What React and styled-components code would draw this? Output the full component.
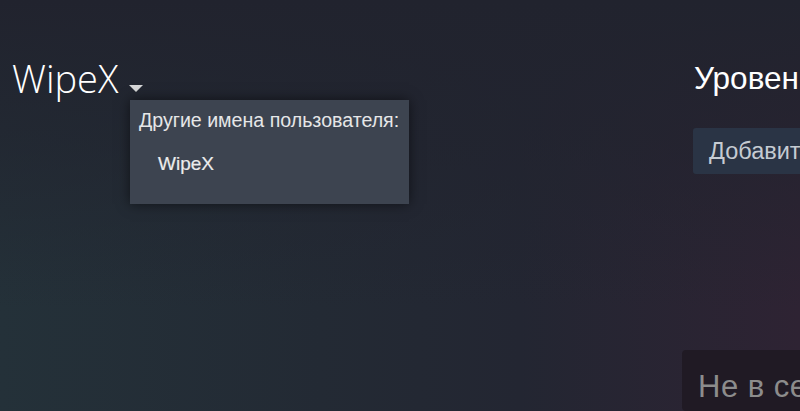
import React from 'react';
import styled, { createGlobalStyle } from 'styled-components';

const GlobalStyle = createGlobalStyle`
  html, body {
    margin: 0;
    padding: 0;
    background: #21232e;
  }
  body {
    font-family: "Liberation Sans", Arial, sans-serif;
    overflow: hidden;
  }
`;

const Page = styled.div`
  width: 800px;
  height: 411px;
  display: flex;
  overflow: hidden;
  background:
    linear-gradient(to bottom, #21232e 0%, rgba(33, 35, 46, 0.6) 35%, rgba(33, 35, 46, 0) 75%),
    linear-gradient(to right, #243139 0%, #232a34 40%, #232632 65%, #2e2333 100%);
`;

const LeftColumn = styled.div`
  flex: 1;
  padding: 58px 0 0 12px;
`;

const NameRow = styled.div`
  position: relative;
  display: inline-flex;
  align-items: flex-end;
`;

const PersonaName = styled.div`
  font-family: "Open Sans", "Liberation Sans", sans-serif;
  font-weight: 300;
  font-size: 38px;
  line-height: 40px;
  color: #ffffff;
`;

const Arrow = styled.span`
  width: 0;
  height: 0;
  margin: 0 0 6px 11px;
  border-left: 7px solid transparent;
  border-right: 7px solid transparent;
  border-top: 7px solid #d6d7d8;
`;

const Dropdown = styled.div`
  position: absolute;
  left: 118px;
  top: 42px;
  width: 279px;
  height: 104px;
  box-sizing: border-box;
  padding: 9px 0 0 9px;
  background: #3d4450;
  box-shadow: 0 0 12px rgba(0, 0, 0, 0.55);
  z-index: 2;
`;

const DropdownTitle = styled.div`
  font-size: 19.6px;
  line-height: 22px;
  color: #e6e7e8;
  white-space: nowrap;
`;

const DropdownItem = styled.div`
  margin: 22px 0 0 19px;
  font-size: 19px;
  line-height: 22px;
  color: #ececec;
  -webkit-text-stroke: 0.2px #ececec;
`;

const RightColumn = styled.div`
  width: 118px;
  flex-shrink: 0;
  padding-top: 58px;
  display: flex;
  flex-direction: column;
  white-space: nowrap;
`;

const LevelTitle = styled.div`
  margin-left: 12px;
  font-size: 31.5px;
  line-height: 40px;
  color: #ffffff;
`;

const AddButton = styled.div`
  margin: 30px 0 0 11px;
  width: 200px;
  height: 47px;
  box-sizing: border-box;
  padding-left: 16px;
  border-radius: 3px;
  background: #2a3445;
  color: #c5cbd2;
  font-size: 23.5px;
  line-height: 46px;
`;

const StatusPanel = styled.div`
  margin-top: 176px;
  width: 220px;
  height: 80px;
  box-sizing: border-box;
  padding: 20px 0 0 16px;
  border-radius: 4px;
  background: #201a24;
  color: #8c8c8c;
  font-size: 31px;
  line-height: 34px;
  letter-spacing: 0.5px;
`;

export default function App() {
  return (
    <>
      <GlobalStyle />
      <Page>
        <LeftColumn>
          <NameRow>
            <PersonaName>WipeX</PersonaName>
            <Arrow />
            <Dropdown>
              <DropdownTitle>Другие имена пользователя:</DropdownTitle>
              <DropdownItem>WipeX</DropdownItem>
            </Dropdown>
          </NameRow>
        </LeftColumn>
        <RightColumn>
          <LevelTitle>Уровень</LevelTitle>
          <AddButton>Добавить в друзья</AddButton>
          <StatusPanel>Не в сети</StatusPanel>
        </RightColumn>
      </Page>
    </>
  );
}
